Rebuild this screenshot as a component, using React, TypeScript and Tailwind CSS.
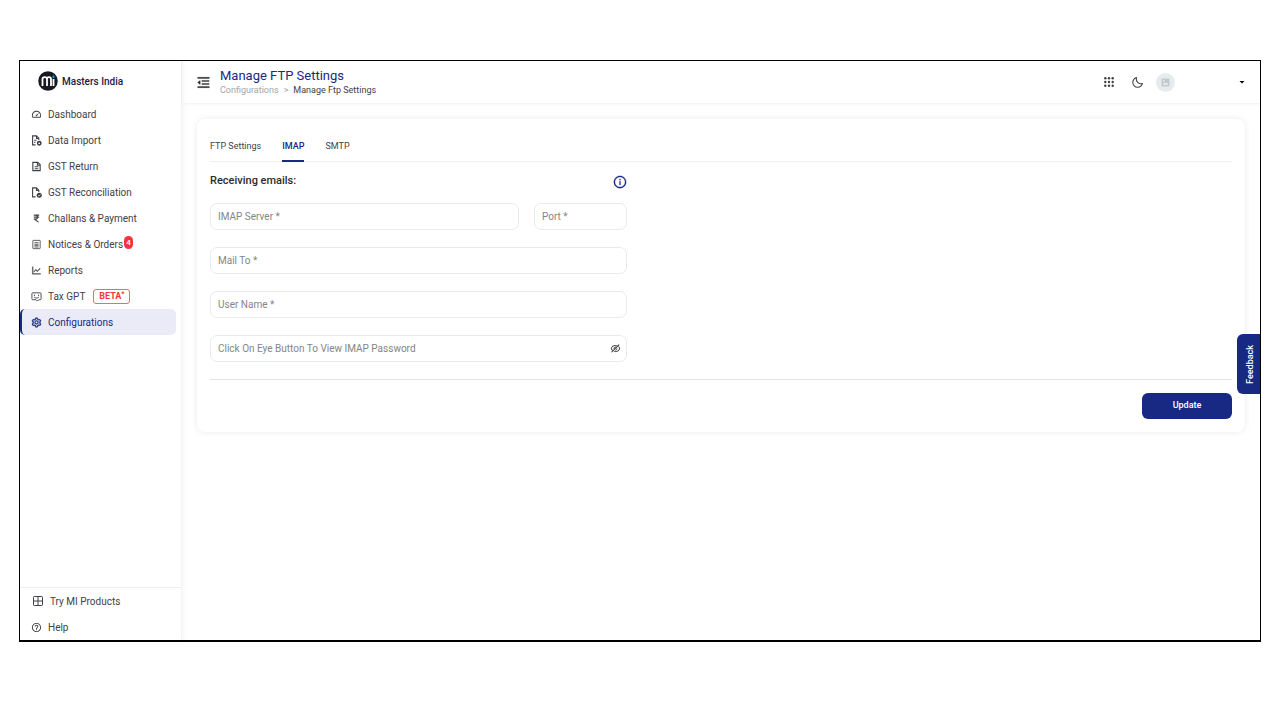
import type { ReactNode } from "react";
import {
  AiOutlineEyeInvisible,
  AiOutlineLineChart,
  AiOutlineMenuFold,
  AiOutlineSetting,
  AiOutlineInfoCircle,
} from "react-icons/ai";
import { BiMoon, BiTachometer } from "react-icons/bi";
import { MdArrowDropDown, MdHelpOutline } from "react-icons/md";
import { FaIndianRupeeSign } from "react-icons/fa6";

type FileKind = "plain" | "gear" | "check";

function FileIcon({ kind }: { kind: FileKind }) {
  return (
    <svg viewBox="0 0 24 24" className="size-[11px]" fill="none" stroke="currentColor" strokeWidth="2.4" aria-hidden="true">
      {kind === "plain" ? (
        <>
          <path d="M4 3h11l5 5v13H4z" />
          <path d="M14 3v6h6M8 12.500h8M8 17h8" />
        </>
      ) : (
        <>
          <path d="M10 21.500H3.500V2H12l5 5v4" />
          <path d="M12 2v5.500h5" />
          {kind === "gear" && <path d="M7 11.500h5M7 16h2.500" />}
          {kind === "gear" ? (
            <circle cx="18" cy="18" r="3.600" strokeWidth="3.400" />
          ) : (
            <>
              <circle cx="18" cy="18" r="5.500" fill="currentColor" stroke="none" />
              <path d="M15.500 18l2 2 3-3.500" stroke="white" strokeWidth="1.500" />
            </>
          )}
        </>
      )}
    </svg>
  );
}

function NoticeIcon() {
  return (
    <svg viewBox="0 0 24 24" className="size-[11px]" fill="none" stroke="currentColor" strokeWidth="1.8" aria-hidden="true">
      <rect x="4" y="3" width="16" height="18" rx="1" />
      <path d="M7.500 8h9M7.500 11.500h9M7.500 14.500h9M7.500 17.500h9" />
    </svg>
  );
}

function BotIcon() {
  return (
    <svg viewBox="0 0 24 24" className="size-[11px]" fill="none" stroke="currentColor" strokeWidth="2" aria-hidden="true">
      <path d="M4 4h16a2 2 0 0 1 2 2v11a2 2 0 0 1-2 2h-3l-3 3-3-3H4a2 2 0 0 1-2-2V6a2 2 0 0 1 2-2z" />
      <path d="M7.500 8v3M16.500 8v3M7 13.500c2.500 2.500 7.500 2.500 10 0" />
    </svg>
  );
}

function WindowIcon() {
  return (
    <svg viewBox="0 0 24 24" className="size-[12px]" fill="none" stroke="currentColor" strokeWidth="2" aria-hidden="true">
      <rect x="3" y="3" width="18" height="18" rx="1.500" />
      <path d="M12 3v18M3 12h18" />
    </svg>
  );
}

function DotsIcon() {
  return (
    <svg viewBox="0 0 10 10" className="size-[10px]" fill="currentColor" aria-hidden="true">
      {[1.3, 5, 8.7].map((y) => [1.3, 5, 8.7].map((x) => <circle key={`${x}-${y}`} cx={x} cy={y} r="1.2" />))}
    </svg>
  );
}

function Logo() {
  return (
    <svg viewBox="0 0 40 40" className="size-5" fill="none" aria-hidden="true">
      <circle cx="20" cy="20" r="19.500" fill="#16191d" />
      <path d="M9 30V16c0-5 9-5 9 0V30M18 30V16c0-5 8-5 8 0V30" stroke="white" strokeWidth="3.600" />
      <path d="M31 16v14" stroke="white" strokeWidth="3.600" />
      <path d="M31 9v5" stroke="#1e9bd7" strokeWidth="3.800" />
    </svg>
  );
}

interface NavItem {
  label: string;
  icon: ReactNode;
  extra?: ReactNode;
  active?: boolean;
}

const navItems: NavItem[] = [
  { label: "Dashboard", icon: <BiTachometer className="size-[11px]" /> },
  { label: "Data Import", icon: <FileIcon kind="gear" /> },
  { label: "GST Return", icon: <FileIcon kind="plain" /> },
  { label: "GST Reconciliation", icon: <FileIcon kind="check" /> },
  { label: "Challans & Payment", icon: <FaIndianRupeeSign className="size-[9px]" /> },
  {
    label: "Notices & Orders",
    icon: <NoticeIcon />,
    extra: (
      <span className="mb-1 ml-px flex h-[13px] w-[9px] items-center justify-center rounded-full bg-[#f8333c] text-[8px] font-medium text-white">
        4
      </span>
    ),
  },
  { label: "Reports", icon: <AiOutlineLineChart className="size-[11px]" strokeWidth="30" /> },
  {
    label: "Tax GPT",
    icon: <BotIcon />,
    extra: (
      <span className="ml-2 flex h-[15px] w-[37px] items-center justify-center rounded-[3px] border border-[#f5666d] text-[9px] font-bold text-[#f8333c]">
        BETA<span className="mb-1 text-[7px]">*</span>
      </span>
    ),
  },
  { label: "Configurations", icon: <AiOutlineSetting className="size-[11px]" strokeWidth="40" />, active: true },
];

function NavLink({ label, icon, extra, active }: NavItem) {
  return (
    <a
      href="#"
      aria-current={active ? "page" : undefined}
      className={
        active
          ? "mr-[5px] flex h-[26px] items-center rounded-[5px] border-l-2 border-[#172983] bg-[#ebebf7] pt-px pl-2 text-[#172983]"
          : "mr-[5px] flex h-[26px] items-center pt-px pl-[10px] text-[#3f4147]"
      }
    >
      <span className="mr-[6px] flex w-[12px] justify-center">{icon}</span>
      <span>{label}</span>
      {extra}
    </a>
  );
}

function Field({ id, label, type = "text" }: { id: string; label: string; type?: string }) {
  return (
    <div className="relative min-w-0 flex-1">
      <input
        id={id}
        type={type}
        placeholder=" "
        className="peer block h-[27px] w-full rounded-[7px] border border-[#e6ebf1] bg-white px-[7px] text-[#3f4147] outline-none"
      />
      <label
        htmlFor={id}
        className="absolute inset-y-0 left-2 hidden items-center text-[#858585] peer-placeholder-shown:flex"
      >
        {label}
      </label>
    </div>
  );
}

export default function App() {
  return (
    <div className="flex min-h-screen bg-white px-[19px] pt-[60px] pb-[78px] font-['Roboto',sans-serif] text-[10px]">
      <div className="flex min-w-0 flex-1 border border-b-2 border-black">
        <aside className="flex w-[162px] shrink-0 flex-col border-r border-[#f3f3f3] shadow-[2px_0_4px_rgba(0,0,0,0.04)]">
          <div className="flex h-10 items-center gap-1 pl-[18px] font-medium text-[#1b1a47]">
            <Logo />
            <span className="pt-px">Masters India</span>
          </div>
          <nav>
            {navItems.map((item) => (
              <NavLink key={item.label} {...item} />
            ))}
          </nav>
          <div className="mt-auto border-t border-[#eeeeee]">
            <a href="#" className="flex h-[26px] items-center gap-[6px] pl-3 text-[#3f4147]">
              <WindowIcon />
              Try MI Products
            </a>
            <a href="#" className="flex h-[26px] items-center gap-[6px] pl-[11px] text-[#3f4147]">
              <MdHelpOutline className="size-[11px]" />
              Help
            </a>
          </div>
        </aside>

        <div className="flex min-w-0 flex-1 flex-col">
          <header className="flex h-[43px] items-center border-b border-[#f4f4f4] pr-3 pl-[14px] shadow-[0_1px_2px_rgba(0,0,0,0.03)]">
            <button type="button" aria-label="Collapse menu" className="mr-[9px] text-[#2b2b2b]">
              <AiOutlineMenuFold className="size-[15px]" strokeWidth="25" />
            </button>
            <div>
              <h1 className="text-[13px] leading-4 text-[#172983]">Manage FTP Settings</h1>
              <nav aria-label="Breadcrumb" className="flex gap-[5px] text-[9px] leading-[13px] text-[#a5a5a5]">
                <a href="#">Configurations</a>
                <span>&gt;</span>
                <span className="text-[#3f4147]">Manage Ftp Settings</span>
              </nav>
            </div>
            <div className="ml-auto flex items-center text-[#3f4147]">
              <button type="button" aria-label="Apps">
                <DotsIcon />
              </button>
              <button type="button" aria-label="Dark mode" className="ml-[17px]">
                <BiMoon className="size-[13px]" />
              </button>
              <span className="ml-3 flex size-[19px] items-center justify-center rounded-full bg-[#e6ecee]">
                <svg viewBox="0 0 16 16" className="size-[9px]" aria-hidden="true">
                  <path d="M1 1h14v14H1z" fill="#c3c8ca" />
                  <path d="M3 12l3-4 2 2 2-2 3 4z" fill="#eef1f2" />
                  <circle cx="5" cy="5" r="1.500" fill="#eef1f2" />
                </svg>
              </span>
              <button type="button" aria-label="Account menu" className="ml-[61px] text-black">
                <MdArrowDropDown className="size-3" />
              </button>
            </div>
          </header>

          <div className="flex flex-1 items-start pt-[15px] pl-[15px]">
            <main className="min-w-0 flex-1 rounded-[8px] bg-white p-[13px] shadow-[0_0_6px_rgba(0,0,0,0.09)]">
              <div role="tablist" className="flex h-[30px] gap-[21px] border-b border-[#f0f0f0] text-[9px] text-[#3f4147]">
                <button type="button" role="tab" aria-selected="false" className="-mb-px border-b-2 border-transparent pt-[2px]">
                  FTP Settings
                </button>
                <button
                  type="button"
                  role="tab"
                  aria-selected="true"
                  className="-mb-px border-b-2 border-[#172983] pt-[2px] font-medium text-[#172983]"
                >
                  IMAP
                </button>
                <button type="button" role="tab" aria-selected="false" className="-mb-px border-b-2 border-transparent pt-[2px]">
                  SMTP
                </button>
              </div>

              <form>
                <div className="flex max-w-[417px] flex-col gap-[17px] pb-[17px]">
                  <div className="-mb-[17px] flex h-[41px] items-center justify-between">
                    <h2 className="pb-[3px] text-[11px] font-medium text-[#2b2b2b]">Receiving emails:</h2>
                    <button type="button" aria-label="Information" className="pb-px text-[#172983]">
                      <AiOutlineInfoCircle className="size-[14px]" strokeWidth="25" />
                    </button>
                  </div>
                  <div className="flex gap-[15px]">
                    <Field id="server" label="IMAP Server *" />
                    <div className="flex w-[93px]">
                      <Field id="port" label="Port *" />
                    </div>
                  </div>
                  <Field id="mail-to" label="Mail To *" />
                  <Field id="user-name" label="User Name *" />
                  <div className="relative">
                    <Field id="password" type="password" label="Click On Eye Button To View IMAP Password" />
                    <button
                      type="button"
                      aria-label="Show password"
                      className="absolute inset-y-0 right-[6px] text-[#2b2b2b]"
                    >
                      <AiOutlineEyeInvisible className="size-[11px]" />
                    </button>
                  </div>
                </div>
                <div className="flex justify-end border-t border-[#e3e3e3] pt-[13px]">
                  <button
                    type="submit"
                    className="h-[26px] w-[90px] rounded-[6px] bg-[#172983] text-[9px] font-medium text-white"
                  >
                    Update
                  </button>
                </div>
              </form>
            </main>
            <div className="w-[15px] shrink-0">
              <button
                type="button"
                className="relative -left-2 mt-[215px] flex h-[60px] w-[23px] items-center justify-center rounded-l-[6px] bg-[#172983] pl-1 text-[9px] font-medium text-white"
              >
                <span className="rotate-180 [writing-mode:vertical-rl]">Feedback</span>
              </button>
            </div>
          </div>
        </div>
      </div>
    </div>
  );
}
